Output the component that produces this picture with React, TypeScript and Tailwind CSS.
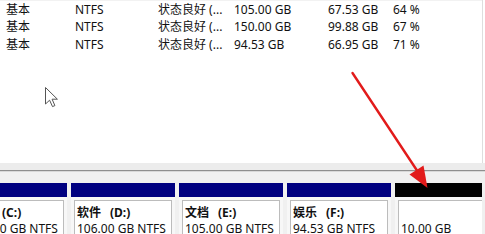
import React from "react";

const rows = [
  ["基本", "NTFS", "状态良好 (...", "105.00 GB", "67.53 GB", "64 %"],
  ["基本", "NTFS", "状态良好 (...", "150.00 GB", "99.88 GB", "67 %"],
  ["基本", "NTFS", "状态良好 (...", "94.53 GB", "66.95 GB", "71 %"],
];

const parts = [
  { label: "系统", drive: "(C:)", size: "120.00 GB NTFS", black: false },
  { label: "软件", drive: "(D:)", size: "106.00 GB NTFS", black: false },
  { label: "文档", drive: "(E:)", size: "105.00 GB NTFS", black: false },
  { label: "娱乐", drive: "(F:)", size: "94.53 GB NTFS", black: false },
  { label: "\u00a0", drive: "", size: "10.00 GB", black: true },
];

export default function App() {
  return (
    <div
      className="relative w-[485px] h-[234px] overflow-hidden bg-white text-[12px] text-[#111]"
      style={{ fontFamily: '"Noto Sans", "Noto Sans CJK SC", sans-serif' }}
    >
      <div className="h-[163px] w-[483px] border-r border-[#dedede] bg-white">
        <div className="h-[1px] bg-[#f2f2f2]" />
        <div className="pl-[6px]">
          {rows.map((r, i) => (
            <div
              key={i}
              className="grid grid-cols-[69px_83px_76px_94px_65px_1fr] h-[17.5px] items-center leading-none"
            >
              {r.map((c, j) => (
                <span key={j} className="whitespace-nowrap">
                  {c}
                </span>
              ))}
            </div>
          ))}
        </div>
      </div>
      <div className="h-[71px] bg-[#f0f0f0]">
        <div className="h-[7px] bg-[#ececec]" />
        <div className="h-[1px] bg-[#8e8e8e]" />
        <div className="h-[1px] bg-[#d8d8d8]" />
        <div className="h-[11px]" />
        <div className="w-[482px] overflow-hidden">
          <div className="flex gap-[4px] -ml-[37px]">
            {parts.map((p, i) => (
              <div key={i} className="w-[104px] shrink-0 bg-[#f7f7f7]">
                <div className={p.black ? "h-[14px] bg-black" : "h-[14px] bg-[#000080]"} />
                <div className="mt-[3px] mx-[3px] h-[40px] border border-[#bcbcbc] bg-white pl-[2px] pt-[4px]">
                  <div className="h-[16px] leading-[16px] font-bold whitespace-nowrap">
                    <span>{p.label}</span>
                    {p.drive && <span className="ml-[9px]">{p.drive}</span>}
                  </div>
                  <div className="h-[16px] leading-[16px] whitespace-nowrap">{p.size}</div>
                </div>
              </div>
            ))}
          </div>
        </div>
      </div>
      <svg className="absolute left-0 top-0" width="485" height="234" viewBox="0 0 485 234">
        <line x1="352.5" y1="73" x2="418" y2="172" stroke="#e21b1b" strokeWidth="2.4" strokeLinecap="round" />
        <polygon points="427.5,188 409.5,174.5 423.5,165.5" fill="#e21b1b" />
        <g transform="translate(45,87)">
          <path
            d="M0.5,0.5 L0.5,17 L4.6,13.2 L7.5,19.6 L9.9,18.6 L7.1,12.2 L12.4,12.2 Z"
            fill="#ffffff"
            stroke="#555"
            strokeWidth="1"
            strokeLinejoin="round"
          />
        </g>
      </svg>
    </div>
  );
}
